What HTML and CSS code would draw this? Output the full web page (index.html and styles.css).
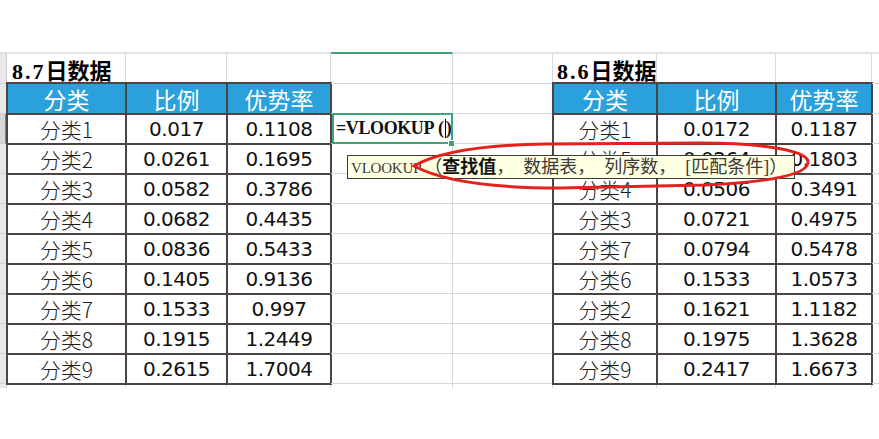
FILE: index.html
```html
<!DOCTYPE html>
<html lang="zh-CN">
<head>
<meta charset="utf-8">
<title>VLOOKUP</title>
<link rel="stylesheet" href="styles.css">
</head>
<body>
<div class="page">
  <div class="sheet">
    <div class="strip rowhead">
      <div class="rh top"></div><div class="rh"></div><div class="rh sel"></div>
      <div class="rh"></div><div class="rh"></div><div class="rh"></div><div class="rh"></div>
      <div class="rh"></div><div class="rh"></div><div class="rh"></div><div class="rh"></div>
      <div class="rh end"></div>
    </div>

    <div class="grp grp-l">
      <div class="trow">
        <div class="tc w119 title"><span class="asc">8.7</span>日数据</div>
        <div class="tc w101"></div>
        <div class="tc w104"></div>
      </div>
      <div class="tbl tbl-l">
        <div class="h">分类</div><div class="h">比例</div><div class="h">优势率</div>
        <div class="k">分类1</div><div class="n">0.017</div><div class="n">0.1108</div>
        <div class="k">分类2</div><div class="n">0.0261</div><div class="n">0.1695</div>
        <div class="k">分类3</div><div class="n">0.0582</div><div class="n">0.3786</div>
        <div class="k">分类4</div><div class="n">0.0682</div><div class="n">0.4435</div>
        <div class="k">分类5</div><div class="n">0.0836</div><div class="n">0.5433</div>
        <div class="k">分类6</div><div class="n">0.1405</div><div class="n">0.9136</div>
        <div class="k">分类7</div><div class="n">0.1533</div><div class="n">0.997</div>
        <div class="k">分类8</div><div class="n">0.1915</div><div class="n">1.2449</div>
        <div class="k">分类9</div><div class="n">0.2615</div><div class="n">1.7004</div>
      </div>
      <div class="tail"><div class="tc w119"></div><div class="tc w101"></div><div class="tc w104"></div></div>
    </div>

    <div class="mgrid">
      <div class="g top act"></div><div class="g top"></div>
      <div class="g"></div><div class="g"></div>
      <div class="g fx">=VLOOKUP<span class="par">(</span><span class="caret"></span><span class="par2">)</span>
        <span class="handle"></span>
        <div class="tip"><span class="fn">VLOOKUP</span><span class="lp">（</span><b>查找值</b>，<span class="sp"></span>数据表，<span class="sp"></span>列序数，<span class="sp"></span>[匹配条件]）</div>
      </div><div class="g"></div>
      <div class="g"></div><div class="g"></div>
      <div class="g"></div><div class="g"></div>
      <div class="g"></div><div class="g"></div>
      <div class="g"></div><div class="g"></div>
      <div class="g"></div><div class="g"></div>
      <div class="g"></div><div class="g"></div>
      <div class="g"></div><div class="g"></div>
      <div class="g"></div><div class="g"></div>
      <div class="g end"></div><div class="g end"></div>
    </div>

    <div class="grp grp-r">
      <div class="trow">
        <div class="tc w104 title title-r"><span class="asc">8.6</span>日数据</div>
        <div class="tc w119"></div>
        <div class="tc w96"></div>
      </div>
      <div class="tbl tbl-r">
        <div class="h">分类</div><div class="h">比例</div><div class="h">优势率</div>
        <div class="k">分类1</div><div class="n">0.0172</div><div class="n">0.1187</div>
        <div class="k">分类5</div><div class="n">0.0264</div><div class="n">0.1803</div>
        <div class="k">分类4</div><div class="n">0.0506</div><div class="n">0.3491</div>
        <div class="k">分类3</div><div class="n">0.0721</div><div class="n">0.4975</div>
        <div class="k">分类7</div><div class="n">0.0794</div><div class="n">0.5478</div>
        <div class="k">分类6</div><div class="n">0.1533</div><div class="n">1.0573</div>
        <div class="k">分类2</div><div class="n">0.1621</div><div class="n">1.1182</div>
        <div class="k">分类8</div><div class="n">0.1975</div><div class="n">1.3628</div>
        <div class="k">分类9</div><div class="n">0.2417</div><div class="n">1.6673</div>
      </div>
      <div class="tail"><div class="tc w104"></div><div class="tc w119"></div><div class="tc w96"></div></div>
    </div>

    <div class="strip colI">
      <div class="ci top"></div><div class="ci"></div><div class="ci"></div>
      <div class="ci"></div><div class="ci"></div><div class="ci"></div><div class="ci"></div>
      <div class="ci"></div><div class="ci"></div><div class="ci"></div><div class="ci"></div>
      <div class="ci end"></div>
    </div>
  </div>

  <svg class="mark" width="879" height="439" viewBox="0 0 879 439" aria-hidden="true">
    <path d="M414,166 C440,151 485,145 545,144 L700,143 C765,143 810,151 808,163 C806,175 770,182 705,185 L560,188 C490,188 440,180 414,166 Z" fill="none" stroke="#e3211d" stroke-width="3"/>
  </svg>
</div>
</body>
</html>
```

FILE: styles.css
```css
html, body {
  margin: 0;
  padding: 0;
  background: #ffffff;
}

.page {
  position: relative;
  width: 879px;
  height: 439px;
  overflow: hidden;
}

.sheet {
  display: flex;
  padding-top: 52px;
}

/* side strips */
.strip {
  display: grid;
  width: 7px;
  grid-template-rows: 32px repeat(10, 30px) 4px;
}

.rh {
  box-sizing: border-box;
  background: #e8e8ea;
  border-bottom: 1px solid #d2d2d6;
  border-right: 1px solid #cfcfd4;
}
.rh.top { border-top: 2px solid #e0e0e6; }
.rh.sel {
  background: #d6d6d8;
  border-right: 2px solid #3fa477;
}
.rh.end { border-bottom: none; }

.ci {
  box-sizing: border-box;
  border-bottom: 1px solid #d6d6dc;
}
.ci.top { border-top: 2px solid #e2e2e8; }
.ci.end { border-bottom: none; }

/* table groups */
.grp {
  display: flex;
  flex-direction: column;
}
.grp-l { width: 324px; }
.grp-r { width: 319px; }

.trow {
  display: flex;
  height: 32px;
}

.tc {
  box-sizing: border-box;
  border-right: 1px solid #d6d6dc;
  height: 100%;
  flex: none;
}
.trow .tc { border-top: 2px solid #e2e2e8; }

.w96 { width: 96px; }
.w101 { width: 101px; }
.w104 { width: 104px; }
.w119 { width: 119px; }

.title {
  font: bold 22px "Liberation Serif", "Noto Sans CJK SC", serif;
  color: #000;
  line-height: 24px;
  padding: 6px 0 0 5px;
  white-space: nowrap;
}
.title-r { padding-left: 4px; }
.asc { letter-spacing: 2px; }

.tbl {
  display: grid;
  gap: 2px;
  padding: 2px;
  background: #4b4441;
  margin: -2px -1px 0 -1px;
  grid-template-rows: 29px repeat(9, 28px);
}
.tbl-l { grid-template-columns: 117px 99px 102px; }
.tbl-r { grid-template-columns: 102px 117px 94px; }

.h, .k, .n {
  display: flex;
  align-items: center;
  justify-content: center;
  box-sizing: border-box;
  white-space: nowrap;
}

.h {
  background: #2aa0dc;
  color: #ffffff;
  font: 23px "Noto Sans CJK SC", sans-serif;
  line-height: 1;
  padding-top: 2px;
}

.k {
  background: #ffffff;
  color: #1c1c1c;
  font: 300 21px "Noto Sans CJK SC", sans-serif;
  line-height: 1;
}

.n {
  background: #ffffff;
  color: #111111;
  font: 20px "DejaVu Sans", sans-serif;
  letter-spacing: -0.5px;
  line-height: 1;
}

.tail {
  display: flex;
  height: 3px;
}
.tail .tc { height: 3px; }

/* middle empty columns */
.mgrid {
  display: grid;
  grid-template-columns: 122px 100px;
  grid-template-rows: 32px repeat(10, 30px) 4px;
}

.g {
  box-sizing: border-box;
  border-right: 1px solid #d6d6dc;
  border-bottom: 1px solid #d6d6dc;
}
.g.top { border-top: 2px solid #e2e2e8; }
.g.top.act { border-top-color: #3fa477; }
.g.end { border-bottom: none; }

.fx {
  position: relative;
  display: flex;
  align-items: center;
  padding-left: 5px;
  font: bold 18px "Liberation Serif", serif;
  letter-spacing: -0.4px;
  color: #111;
  white-space: nowrap;
}
.fx::after {
  content: "";
  position: absolute;
  left: 1px;
  top: -1px;
  right: -1px;
  bottom: -1px;
  border: 2px solid #3fa477;
}
.par { margin-left: 4px; }
.caret {
  display: inline-block;
  width: 1px;
  height: 19px;
  background: #000;
  margin: 0 0 0 1px;
}
.handle {
  position: absolute;
  right: -3px;
  bottom: -4px;
  width: 5px;
  height: 5px;
  background: #3fa477;
  border: 1px solid #fff;
  z-index: 2;
}

.tip {
  position: absolute;
  left: 16px;
  top: 41px;
  z-index: 5;
  box-sizing: border-box;
  height: 24px;
  width: 448px;
  padding: 0 4px 0 3px;
  background: #ffffe1;
  border: 1px solid #3a3a3a;
  font: 18px "Liberation Serif", "Noto Sans CJK SC", serif;
  line-height: 22px;
  color: #3a3a3a;
  letter-spacing: 0;
  white-space: nowrap;
}
.tip b {
  font-weight: bold;
  color: #111;
}
.fn {
  font-size: 15px;
  letter-spacing: -0.2px;
}
.lp { margin-left: 3px; }
.sp {
  display: inline-block;
  width: 9px;
}

.mark {
  position: absolute;
  left: 0;
  top: 0;
  z-index: 10;
  pointer-events: none;
}
```
